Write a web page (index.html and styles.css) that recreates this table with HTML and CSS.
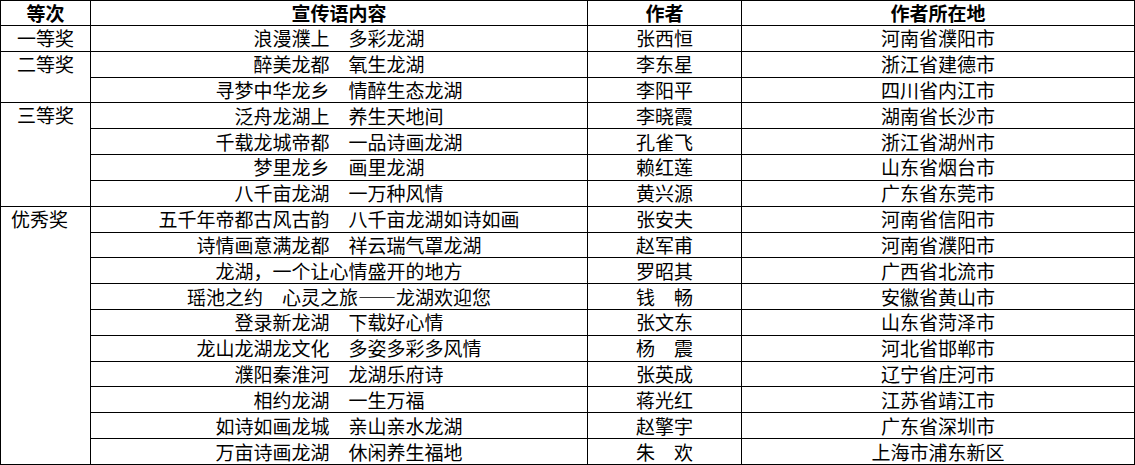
FILE: index.html
```html
<!DOCTYPE html>
<html lang="zh-CN">
<head>
<meta charset="utf-8">
<title>宣传语评选结果</title>
<link rel="stylesheet" href="styles.css">
</head>
<body>
<table class="awards">
  <colgroup>
    <col class="c-rank">
    <col class="c-slogan">
    <col class="c-author">
    <col class="c-place">
  </colgroup>
  <thead>
    <tr><th>等次</th><th>宣传语内容</th><th>作者</th><th>作者所在地</th></tr>
  </thead>
  <tbody>
    <tr><td class="rank">一等奖</td><td>浪漫濮上　多彩龙湖</td><td>张西恒</td><td>河南省濮阳市</td></tr>
    <tr><td class="rank" rowspan="2">二等奖</td><td>醉美龙都　氧生龙湖</td><td>李东星</td><td>浙江省建德市</td></tr>
    <tr><td>寻梦中华龙乡　情醉生态龙湖</td><td>李阳平</td><td>四川省内江市</td></tr>
    <tr><td class="rank" rowspan="4">三等奖</td><td>泛舟龙湖上　养生天地间</td><td>李晓霞</td><td>湖南省长沙市</td></tr>
    <tr><td>千载龙城帝都　一品诗画龙湖</td><td>孔雀飞</td><td>浙江省湖州市</td></tr>
    <tr><td>梦里龙乡　画里龙湖</td><td>赖红莲</td><td>山东省烟台市</td></tr>
    <tr><td>八千亩龙湖　一万种风情</td><td>黄兴源</td><td>广东省东莞市</td></tr>
    <tr><td class="rank left" rowspan="10">优秀奖</td><td>五千年帝都古风古韵　八千亩龙湖如诗如画</td><td>张安夫</td><td>河南省信阳市</td></tr>
    <tr><td>诗情画意满龙都　祥云瑞气罩龙湖</td><td>赵军甫</td><td>河南省濮阳市</td></tr>
    <tr><td>龙湖，一个让心情盛开的地方</td><td>罗昭其</td><td>广西省北流市</td></tr>
    <tr><td>瑶池之约　心灵之旅——龙湖欢迎您</td><td>钱　畅</td><td>安徽省黄山市</td></tr>
    <tr><td>登录新龙湖　下载好心情</td><td>张文东</td><td>山东省菏泽市</td></tr>
    <tr><td>龙山龙湖龙文化　多姿多彩多风情</td><td>杨　震</td><td>河北省邯郸市</td></tr>
    <tr><td>濮阳秦淮河　龙湖乐府诗</td><td>张英成</td><td>辽宁省庄河市</td></tr>
    <tr><td>相约龙湖　一生万福</td><td>蒋光红</td><td>江苏省靖江市</td></tr>
    <tr><td>如诗如画龙城　亲山亲水龙湖</td><td>赵擎宇</td><td>广东省深圳市</td></tr>
    <tr><td>万亩诗画龙湖　休闲养生福地</td><td>朱　欢</td><td>上海市浦东新区</td></tr>
  </tbody>
</table>
</body>
</html>
```
FILE: styles.css
```css
html, body {
  margin: 0;
  padding: 0;
  background: #ffffff;
}

.awards {
  border-collapse: collapse;
  table-layout: fixed;
  width: 1135px;
  height: 465px;
  font-family: "Noto Sans CJK SC", "Liberation Sans", sans-serif;
  font-size: 19px;
  color: #000000;
}

.c-rank { width: 90px; }
.c-slogan { width: 497px; }
.c-author { width: 154px; }
.c-place { width: 393px; }

.awards th,
.awards td {
  border: 1px solid #000000;
  padding: 0;
  height: 24px;
  line-height: 24px;
  text-align: center;
  vertical-align: middle;
  white-space: nowrap;
  overflow: hidden;
}

.awards th {
  font-weight: 700;
}

.awards td.rank {
  vertical-align: top;
}

.awards td.left {
  text-align: left;
  padding-left: 10px;
}
```
